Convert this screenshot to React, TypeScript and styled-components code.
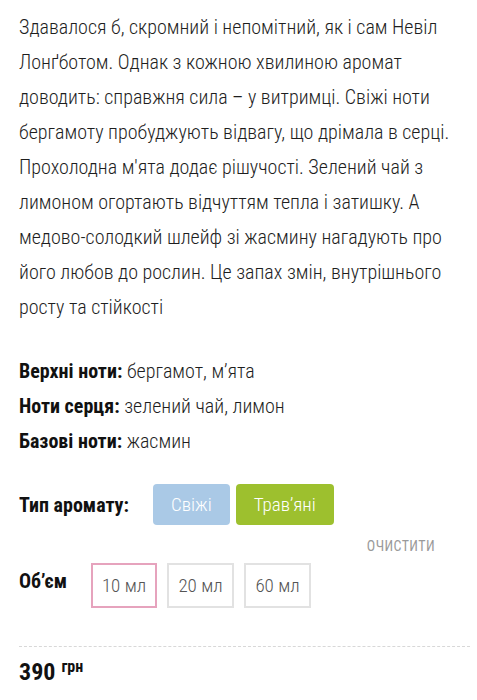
import React from "react";
import styled, { createGlobalStyle } from "styled-components";

const Global = createGlobalStyle`
  html, body { margin: 0; padding: 0; background: #fff; }
  body { font-family: "Roboto Condensed", "Liberation Sans Narrow", "DejaVu Sans Condensed", sans-serif; font-stretch: condensed; color: #1f1f1f; }
  * { box-sizing: border-box; }
`;

const Page = styled.div`
  padding: 10px 19px 0 19px;
  width: 477px;
`;

const Description = styled.p`
  margin: 0;
  font-size: 20px;
  font-weight: 300;
  line-height: 35px;
  color: #1e1e1e;
  white-space: nowrap;
`;

const Notes = styled.div`
  margin-top: 29px;
  display: flex;
  flex-direction: column;
`;

const NoteLine = styled.div`
  font-size: 20px;
  font-weight: 300;
  line-height: 35px;
  color: #1e1e1e;
`;

const Label = styled.b`
  font-weight: 700;
  color: #111;
`;

const TypeRow = styled.div`
  margin-top: 25px;
  display: flex;
  align-items: center;
`;

const RowLabel = styled.div`
  font-size: 20px;
  font-weight: 700;
  color: #111;
  width: 134px;
  white-space: nowrap;
`;

const Chip = styled.button<{ $bg: string }>`
  border: none;
  border-radius: 4px;
  background: ${(p) => p.$bg};
  color: #fff;
  font-family: inherit;
  font-size: 19px;
  font-weight: 300;
  height: 41px;
  padding: 0 18px;
  margin-right: 6px;
`;

const ClearRow = styled.div`
  display: flex;
  justify-content: flex-end;
  padding-right: 23px;
  margin-top: 13px;
`;

const Clear = styled.span`
  font-size: 14px;
  letter-spacing: 0.4px;
  color: #9a9a9a;
  text-transform: uppercase;
`;

const VolumeRow = styled.div`
  margin-top: 9px;
  display: flex;
  align-items: flex-start;
`;

const VolumeLabel = styled(RowLabel)`
  width: 72px;
  line-height: 36px;
`;

const VolumeBox = styled.div<{ $active?: boolean }>`
  width: ${(p) => (p.$active ? 66 : 67)}px;
  height: 45px;
  margin-right: 10px;
  border: ${(p) => (p.$active ? "2px solid #e6a3bd" : "2px solid #e2e2e2")};
  display: flex;
  align-items: center;
  justify-content: center;
  font-size: 19px;
  font-weight: 300;
  color: #555;
`;

const Divider = styled.div`
  margin-top: 38px;
  border-top: 1px dashed #d8d8d8;
  width: 451px;
`;

const Price = styled.div`
  margin-top: 11px;
  display: flex;
  align-items: flex-start;
`;

const Amount = styled.span`
  font-size: 24px;
  font-weight: 700;
  color: #111;
  line-height: 28px;
`;

const Currency = styled.span`
  font-size: 16px;
  font-weight: 700;
  color: #111;
  margin-left: 6px;
  line-height: 18px;
`;

const lines = [
  "Здавалося б, скромний і непомітний, як і сам Невіл",
  "Лонґботом. Однак з кожною хвилиною аромат",
  "доводить: справжня сила – у витримці. Свіжі ноти",
  "бергамоту пробуджують відвагу, що дрімала в серці.",
  "Прохолодна м'ята додає рішучості. Зелений чай з",
  "лимоном огортають відчуттям тепла і затишку. А",
  "медово-солодкий шлейф зі жасмину нагадують про",
  "його любов до рослин. Це запах змін, внутрішнього",
  "росту та стійкості",
];

export default function App() {
  return (
    <Page>
      <Global />
      <Description>
        {lines.map((l, i) => (
          <React.Fragment key={i}>
            {l}
            {i < lines.length - 1 && <br />}
          </React.Fragment>
        ))}
      </Description>
      <Notes>
        <NoteLine><Label>Верхні ноти:</Label> бергамот, м’ята</NoteLine>
        <NoteLine><Label>Ноти серця:</Label> зелений чай, лимон</NoteLine>
        <NoteLine><Label>Базові ноти:</Label> жасмин</NoteLine>
      </Notes>
      <TypeRow>
        <RowLabel>Тип аромату:</RowLabel>
        <Chip $bg="#aac9e6">Свіжі</Chip>
        <Chip $bg="#9dc02e">Трав’яні</Chip>
      </TypeRow>
      <ClearRow>
        <Clear>Очистити</Clear>
      </ClearRow>
      <VolumeRow>
        <VolumeLabel>Об’єм</VolumeLabel>
        <VolumeBox $active>10 мл</VolumeBox>
        <VolumeBox>20 мл</VolumeBox>
        <VolumeBox>60 мл</VolumeBox>
      </VolumeRow>
      <Divider />
      <Price>
        <Amount>390</Amount>
        <Currency>грн</Currency>
      </Price>
    </Page>
  );
}
